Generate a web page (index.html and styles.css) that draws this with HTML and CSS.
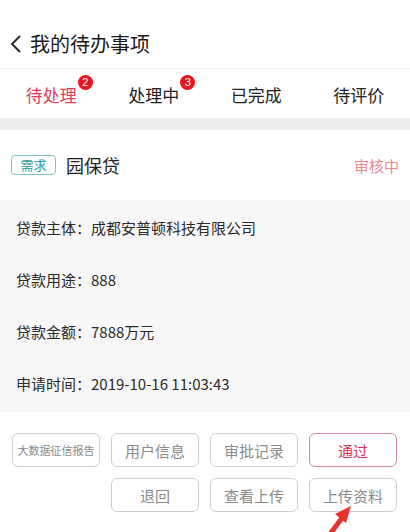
FILE: index.html
```html
<!DOCTYPE html>
<html lang="zh-CN">
<head>
  <meta charset="UTF-8">
  <meta name="viewport" content="width=device-width, initial-scale=1.0">
  <title>我的待办事项</title>
  <link rel="stylesheet" href="styles.css">
</head>
<body>

  <!-- Header -->
  <div class="header">
    <svg class="back" width="12" height="20" viewBox="0 0 12 20">
      <path d="M10 2 L2 10 L10 18" fill="none" stroke="#222" stroke-width="1.8"/>
    </svg>
    <span class="title">我的待办事项</span>
  </div>

  <!-- Tabs -->
  <div class="tabs">
    <div class="tab active">待处理<span class="badge">2</span></div>
    <div class="tab">处理中<span class="badge">3</span></div>
    <div class="tab">已完成</div>
    <div class="tab">待评价</div>
  </div>

  <div class="divider"></div>

  <!-- Card -->
  <div class="card-head">
    <span class="tag">需求</span>
    <span class="card-title">园保贷</span>
    <span class="status">审核中</span>
  </div>

  <div class="info">
    <div class="info-row">贷款主体：成都安普顿科技有限公司</div>
    <div class="info-row">贷款用途：888</div>
    <div class="info-row">贷款金额：7888万元</div>
    <div class="info-row">申请时间：2019-10-16 11:03:43</div>
  </div>

  <div class="actions">
    <button class="btn small">大数据征信报告</button>
    <button class="btn">用户信息</button>
    <button class="btn">审批记录</button>
    <button class="btn primary">通过</button>
    <button class="btn second">退回</button>
    <button class="btn">查看上传</button>
    <button class="btn">上传资料</button>
  </div>

  <!-- Annotation arrow -->
  <svg class="arrow" width="40" height="40" viewBox="0 0 40 40">
    <path d="M8 40 L20 24" stroke="#e8322c" stroke-width="5"/>
    <polygon points="29,12 13,20 24,29" fill="#e8322c"/>
  </svg>

</body>
</html>
```

FILE: styles.css
```css
body {
  font-family: "Noto Sans CJK SC", "Noto Sans", sans-serif;
  margin: 0;
  background: #fff;
  color: #222;
  width: 410px;
  height: 532px;
  overflow: hidden;
  position: relative;
}
.header {
  height: 68px;
  display: flex;
  align-items: flex-end;
  padding: 0 0 11px 10px;
  box-sizing: border-box;
  gap: 8px;
}
.back {
  margin-bottom: 3px;
}
.title {
  font-size: 20px;
  line-height: 26px;
  color: #1a1a1a;
}
.tabs {
  height: 50px;
  display: flex;
  align-items: center;
  border-top: 1px solid #f4f4f4;
  box-sizing: border-box;
}
.tab {
  flex: 1;
  text-align: center;
  font-size: 17px;
  color: #222;
  position: relative;
  padding-top: 1px;
}
.tab.active {
  color: #df3c62;
}
.badge {
  position: absolute;
  top: -6px;
  margin-left: 1px;
  width: 15px;
  height: 15px;
  border-radius: 50%;
  background: #e8141e;
  color: #fff;
  font-size: 11px;
  line-height: 15px;
  text-align: center;
  font-family: "Liberation Sans", sans-serif;
}
.divider {
  height: 12px;
  background: #ededed;
}
.card-head {
  height: 70px;
  display: flex;
  align-items: center;
  padding: 0 11px;
}
.tag {
  border: 1px solid #7ec3c2;
  color: #2a9d9d;
  border-radius: 4px;
  font-size: 13px;
  line-height: 18px;
  width: 43px;
  text-align: center;
  margin-right: 10px;
}
.card-title {
  font-size: 18px;
  flex: 1;
}
.status {
  font-size: 15px;
  color: #e8898f;
}
.info {
  background: #f7f7f7;
  padding: 2px 16px;
}
.info-row {
  height: 52px;
  line-height: 52px;
  font-size: 15px;
  color: #2b2b2b;
}
.actions {
  display: grid;
  grid-template-columns: repeat(4, 88px);
  gap: 11px 11px;
  padding: 21px 12px 0;
}
.btn {
  height: 34px;
  border: 1px solid #cfcfcf;
  border-radius: 6px;
  background: #fff;
  color: #8a8a8a;
  font-family: inherit;
  font-size: 15px;
  padding: 0;
}
.btn.small {
  font-size: 11px;
}
.btn.primary {
  border-color: #d98a9c;
  color: #d7315a;
}
.btn.second {
  grid-column: 2;
}
.arrow {
  position: absolute;
  left: 322px;
  top: 494px;
}
```
